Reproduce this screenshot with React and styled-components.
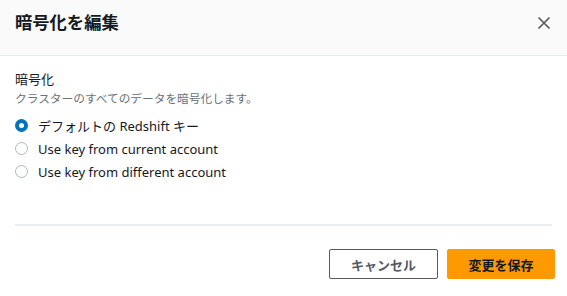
import React, { useState } from 'react';
import styled, { createGlobalStyle } from 'styled-components';

const GlobalStyle = createGlobalStyle`
  html, body {
    margin: 0;
    padding: 0;
    background: #ffffff;
  }
  body {
    font-family: "Noto Sans", "Noto Sans CJK JP", sans-serif;
    color: #16191f;
  }
`;

const Modal = styled.div`
  width: 567px;
  height: 296px;
  display: flex;
  flex-direction: column;
  background: #ffffff;
`;

const Header = styled.div`
  height: 56px;
  box-sizing: border-box;
  padding: 9px 12px 0 15px;
  display: flex;
  justify-content: space-between;
  align-items: flex-start;
  background: #fafafa;
  border-bottom: 1px solid #eaeded;
`;

const Title = styled.h2`
  margin: 0;
  font-family: "Noto Sans CJK JP", sans-serif;
  font-size: 17.3px;
  font-weight: 700;
  line-height: 26px;
  color: #16191f;
`;

const CloseButton = styled.button`
  border: none;
  background: none;
  padding: 0;
  width: 22px;
  height: 22px;
  margin-top: 3px;
  display: flex;
  align-items: center;
  justify-content: center;
  color: #545b64;
  cursor: pointer;
`;

const Body = styled.div`
  padding: 13px 15px 0 15px;
  display: flex;
  flex-direction: column;
`;

const Label = styled.div`
  font-family: "Noto Sans CJK JP", sans-serif;
  font-size: 13px;
  line-height: 20px;
  color: #16191f;
`;

const Description = styled.div`
  margin-top: 1px;
  font-family: "Noto Sans CJK JP", sans-serif;
  font-size: 11.7px;
  line-height: 16px;
  color: #687078;
`;

const RadioGroup = styled.div`
  display: flex;
  flex-direction: column;
  margin-top: 8px;
`;

const RadioRow = styled.label`
  display: flex;
  align-items: center;
  height: 23px;
  gap: 10px;
  cursor: pointer;
`;

const RadioCircle = styled.span`
  width: 13px;
  height: 13px;
  border-radius: 50%;
  box-sizing: border-box;
  border: ${p => (p.checked ? '4px solid #0073bb' : '1.5px solid #aab7b8')};
  background: #ffffff;
  flex-shrink: 0;
`;

const RadioText = styled.span`
  font-size: 13px;
  line-height: 20px;
  color: #16191f;
`;

const Divider = styled.div`
  margin-top: 41px;
  height: 2px;
  background: #eaeded;
`;

const Footer = styled.div`
  display: flex;
  justify-content: flex-end;
  gap: 9px;
  padding: 23px 12px 0 0;
`;

const Button = styled.button`
  height: 30px;
  box-sizing: border-box;
  border-radius: 2px;
  font-family: "Noto Sans CJK JP", sans-serif;
  font-size: 13px;
  font-weight: 700;
  cursor: pointer;
  border: 1px solid ${p => (p.primary ? '#ff9900' : '#545b64')};
  background: ${p => (p.primary ? '#ff9900' : '#ffffff')};
  color: ${p => (p.primary ? '#16191f' : '#545b64')};
  width: ${p => (p.primary ? '108px' : '109px')};
`;

const options = [
  'デフォルトの Redshift キー',
  'Use key from current account',
  'Use key from different account',
];

export default function App() {
  const [selected, setSelected] = useState(0);
  return (
    <>
      <GlobalStyle />
      <Modal>
        <Header>
          <Title>暗号化を編集</Title>
          <CloseButton aria-label="閉じる">
            <svg width="14" height="14" viewBox="0 0 14 14">
              <path d="M1.5 1.5 L12.5 12.5 M12.5 1.5 L1.5 12.5" stroke="currentColor" strokeWidth="1.7" fill="none" />
            </svg>
          </CloseButton>
        </Header>
        <Body>
          <Label>暗号化</Label>
          <Description>クラスターのすべてのデータを暗号化します。</Description>
          <RadioGroup>
            {options.map((opt, i) => (
              <RadioRow key={opt} onClick={() => setSelected(i)}>
                <RadioCircle checked={selected === i} />
                <RadioText>{opt}</RadioText>
              </RadioRow>
            ))}
          </RadioGroup>
          <Divider />
        </Body>
        <Footer>
          <Button>キャンセル</Button>
          <Button primary>変更を保存</Button>
        </Footer>
      </Modal>
    </>
  );
}
